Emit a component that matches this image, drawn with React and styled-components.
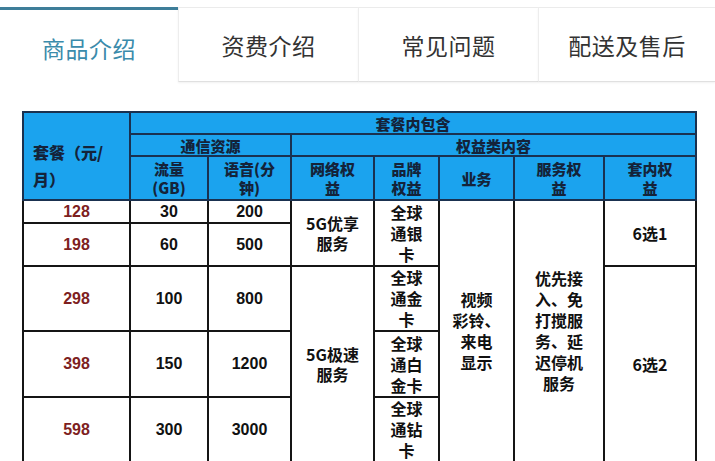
import React from 'react';
import styled, { createGlobalStyle } from 'styled-components';

const GlobalStyle = createGlobalStyle`
  body {
    margin: 0;
    background: #ffffff;
    font-family: "Noto Sans CJK SC", "Noto Sans", sans-serif;
  }
`;

const Page = styled.div`
  width: 715px;
  height: 461px;
  overflow: hidden;
  background: #fff;
`;

const TabBar = styled.div`
  display: flex;
  margin-top: 7px;
  border-top: 1px solid #ececec;
`;

const Tab = styled.div`
  flex: 0 0 ${props => props.width}px;
  height: ${props => (props.active ? 76 : 74)}px;
  display: flex;
  align-items: center;
  justify-content: center;
  box-sizing: border-box;
  font-size: 23px;
  font-weight: 400;
  letter-spacing: 0.5px;
  color: ${props => (props.active ? '#3b8bab' : '#333')};
  background: #fff;
  border-top: ${props => (props.active ? '3px solid #3e7e99' : 'none')};
  margin-top: ${props => (props.active ? '-1px' : '0')};
  border-left: ${props => (props.active ? 'none' : '1px solid #ededed')};
  border-bottom: ${props => (props.active ? 'none' : '1px solid #e0e0e0')};
  box-shadow: ${props => (props.active ? 'none' : '0 1px 2px rgba(0,0,0,0.06)')};
  padding-top: ${props => (props.active ? '3px' : '0')};
`;

const TableWrap = styled.div`
  margin: 28px 0 0 22px;
`;

const Table = styled.table`
  border-collapse: collapse;
  table-layout: fixed;
  width: 673px;
  font-weight: 700;
  font-size: 15px;
  color: #111;
`;

const HeadCell = styled.th`
  background: #1ba3ee;
  border: 2px solid #1a3150;
  color: #14233a;
  font-size: 15px;
  font-weight: 900;
  line-height: 19px;
  padding: 0 2px;
  text-align: center;
  vertical-align: middle;
`;

const CornerCell = styled(HeadCell)`
  text-align: left;
  font-size: 16px;
  line-height: 27px;
  padding: 20px 0 0 9px;
`;

const Cell = styled.td`
  border: 2px solid #151515;
  text-align: center;
  vertical-align: middle;
  line-height: ${props => props.lh || 20}px;
  font-size: 16px;
  padding: 0;
  color: ${props => (props.price ? '#7e1f1f' : '#111')};
  font-family: ${props =>
    props.num ? '"Liberation Sans", "Noto Sans CJK SC", sans-serif' : '"Noto Sans CJK SC", sans-serif'};
`;

const Row = styled.tr`
  height: ${props => props.h}px;
`;

const cols = [107, 78, 83, 83, 65, 75, 90, 92];

const Lines = ({ items }) =>
  items.map((t, i) => (
    <React.Fragment key={i}>
      {t}
      {i < items.length - 1 && <br />}
    </React.Fragment>
  ));

export default function App() {
  return (
    <Page>
      <GlobalStyle />
      <TabBar>
        <Tab width={178} active>商品介绍</Tab>
        <Tab width={180}>资费介绍</Tab>
        <Tab width={180}>常见问题</Tab>
        <Tab width={177}>配送及售后</Tab>
      </TabBar>
      <TableWrap>
        <Table>
          <colgroup>
            {cols.map((w, i) => (
              <col key={i} style={{ width: w }} />
            ))}
          </colgroup>
          <thead>
            <Row h={22}>
              <CornerCell rowSpan={3}>
                套餐（元/<br />月）
              </CornerCell>
              <HeadCell colSpan={7}>套餐内包含</HeadCell>
            </Row>
            <Row h={22}>
              <HeadCell colSpan={2}>通信资源</HeadCell>
              <HeadCell colSpan={5}>权益类内容</HeadCell>
            </Row>
            <Row h={44}>
              <HeadCell><Lines items={['流量', '(GB)']} /></HeadCell>
              <HeadCell><Lines items={['语音(分', '钟)']} /></HeadCell>
              <HeadCell><Lines items={['网络权', '益']} /></HeadCell>
              <HeadCell><Lines items={['品牌', '权益']} /></HeadCell>
              <HeadCell>业务</HeadCell>
              <HeadCell><Lines items={['服务权', '益']} /></HeadCell>
              <HeadCell><Lines items={['套内权', '益']} /></HeadCell>
            </Row>
          </thead>
          <tbody>
            <Row h={23}>
              <Cell num price>128</Cell>
              <Cell num>30</Cell>
              <Cell num>200</Cell>
              <Cell rowSpan={2}><Lines items={['5G优享', '服务']} /></Cell>
              <Cell rowSpan={2} lh={21}><Lines items={['全球', '通银', '卡']} /></Cell>
              <Cell rowSpan={5} lh={21}><Lines items={['视频', '彩铃、', '来电', '显示']} /></Cell>
              <Cell rowSpan={5} lh={21}>
                <Lines items={['优先接', '入、免', '打搅服', '务、延', '迟停机', '服务']} />
              </Cell>
              <Cell rowSpan={2}>6选1</Cell>
            </Row>
            <Row h={43}>
              <Cell num price>198</Cell>
              <Cell num>60</Cell>
              <Cell num>500</Cell>
            </Row>
            <Row h={65}>
              <Cell num price>298</Cell>
              <Cell num>100</Cell>
              <Cell num>800</Cell>
              <Cell rowSpan={3}><Lines items={['5G极速', '服务']} /></Cell>
              <Cell lh={21}><Lines items={['全球', '通金', '卡']} /></Cell>
              <Cell rowSpan={3}>6选2</Cell>
            </Row>
            <Row h={66}>
              <Cell num price>398</Cell>
              <Cell num>150</Cell>
              <Cell num>1200</Cell>
              <Cell lh={21}><Lines items={['全球', '通白', '金卡']} /></Cell>
            </Row>
            <Row h={65}>
              <Cell num price>598</Cell>
              <Cell num>300</Cell>
              <Cell num>3000</Cell>
              <Cell lh={21}><Lines items={['全球', '通钻', '卡']} /></Cell>
            </Row>
          </tbody>
        </Table>
      </TableWrap>
    </Page>
  );
}
